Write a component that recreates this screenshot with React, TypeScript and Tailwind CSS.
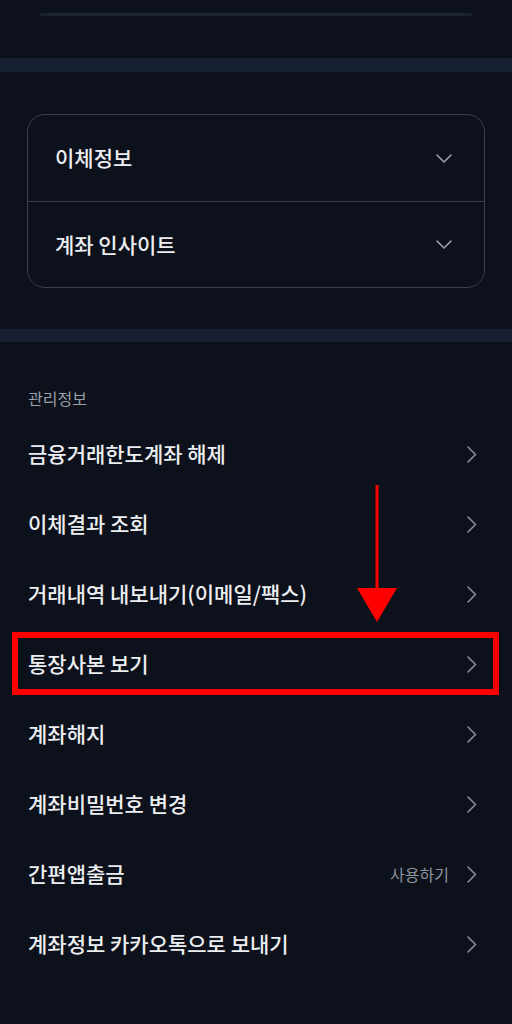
const FONT = { fontFamily: '"Noto Sans CJK KR", "Noto Sans", sans-serif' }

const rows = [
  { label: "금융거래한도계좌 해제" },
  { label: "이체결과 조회" },
  { label: "거래내역 내보내기(이메일/팩스)" },
  { label: "통장사본 보기", highlight: true },
  { label: "계좌해지" },
  { label: "계좌비밀번호 변경" },
  { label: "간편앱출금", extra: "사용하기" },
  { label: "계좌정보 카카오톡으로 보내기" },
]

function ChevronRight() {
  return (
    <svg width="10" height="17" viewBox="0 0 10 17" fill="none" className="shrink-0">
      <polyline points="1,1 8.5,8.5 1,16" stroke="#878d97" strokeWidth="1.6" strokeLinecap="round" strokeLinejoin="round" />
    </svg>
  )
}

function ChevronDown() {
  return (
    <svg width="16" height="9" viewBox="0 0 16 9" fill="none" className="shrink-0">
      <polyline points="1,1 8,8 15,1" stroke="#9aa0a9" strokeWidth="1.6" strokeLinecap="round" strokeLinejoin="round" />
    </svg>
  )
}

function Accordion() {
  const items = ["이체정보", "계좌 인사이트"]
  return (
    <div className="mx-[27px] mt-[42px] rounded-[18px] border border-[#394150]">
      {items.map((item, i) => (
        <div
          key={item}
          className={`flex h-[86px] items-center justify-between pl-[27px] pr-[32px] ${i > 0 ? "border-t border-[#394150]" : ""}`}
        >
          <span className="text-[21px] font-medium text-[#eceef1]">{item}</span>
          <ChevronDown />
        </div>
      ))}
    </div>
  )
}

export default function App() {
  return (
    <div className="min-h-[1024px] w-[512px] bg-[#0c111b] pt-[13px]" style={FONT}>
      <div className="mx-[40px] h-[3px] rounded-full bg-[#1d2431]" />
      <div className="mt-[42px] h-[14px] bg-[#172030]" />
      <Accordion />
      <div className="mt-[41px] h-[13px] bg-[#172030]" />

      <div className="relative pt-[45px]">
        <p className="pl-[28px] text-[16px] leading-[22px] text-[#9aa0a9]">관리정보</p>
        <div className="mt-[10px]">
          {rows.map((row) => (
            <div key={row.label} className="relative flex h-[70px] items-center justify-between pl-[28px] pr-[35px]">
              <span className="text-[21px] font-medium text-[#eceef1]">{row.label}</span>
              <div className="flex items-center gap-[18px]">
                {row.extra && <span className="text-[16px] text-[#8f959e]">{row.extra}</span>}
                <ChevronRight />
              </div>
              {row.highlight && (
                <div className="pointer-events-none absolute left-[12px] right-[13px] top-[3px] bottom-[4px] border-[6px] border-[#ff0000]" />
              )}
            </div>
          ))}
        </div>

        <svg
          className="pointer-events-none absolute left-[356px] top-[143px]"
          width="42"
          height="138"
          viewBox="0 0 42 138"
        >
          <rect x="19.5" y="0" width="3" height="108" fill="#ff0000" />
          <polygon points="1,103 41,103 21,137" fill="#ff0000" />
        </svg>
      </div>
    </div>
  )
}
